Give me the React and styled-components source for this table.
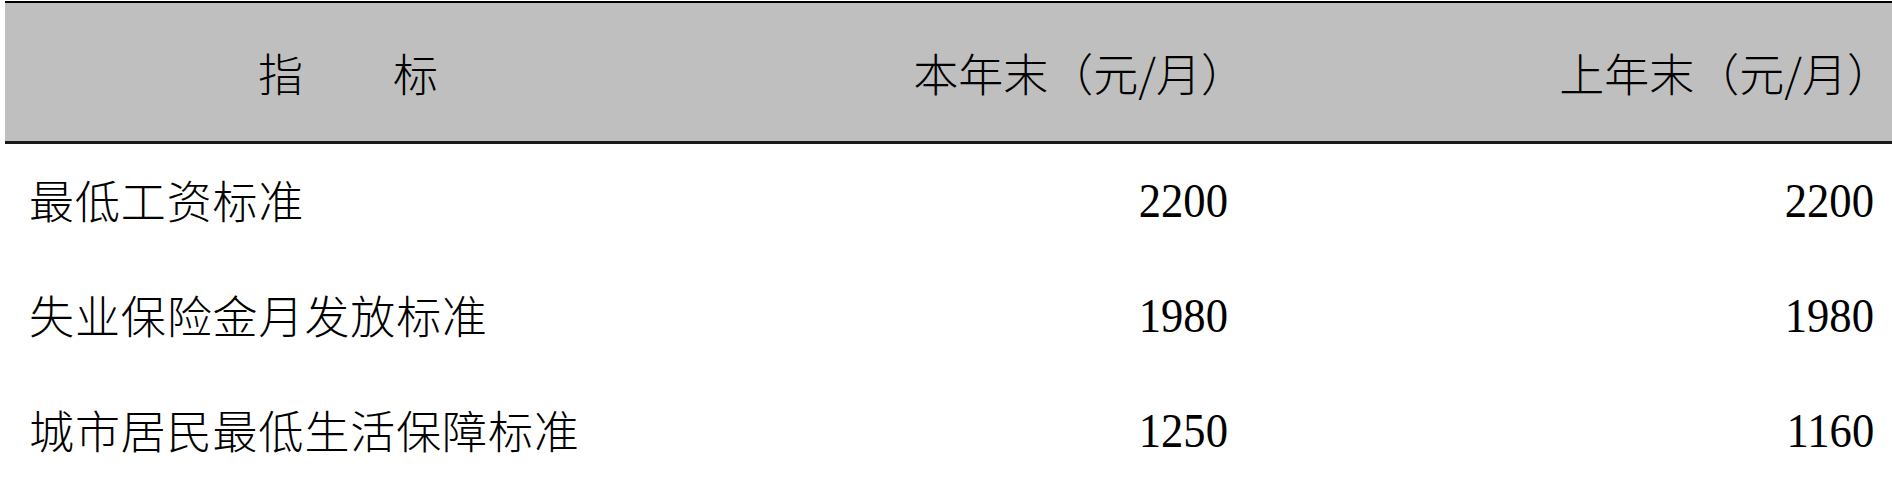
import React from "react";
import styled, { createGlobalStyle } from "styled-components";

const Global = createGlobalStyle`
  html, body { margin: 0; padding: 0; background: #ffffff; }
  body { font-family: "Liberation Serif", "Noto Sans CJK SC", serif; color: #000; }
`;

const Page = styled.div`
  padding: 1px 0 0 5px;
  width: 1892px;
  box-sizing: border-box;
`;

const Table = styled.div`
  display: grid;
  grid-template-columns: 686px 555px 1fr;
`;

const HeadCell = styled.div`
  background: #bfbfbf;
  border-top: 2px solid #000;
  border-bottom: 3px solid #1a1a1a;
  height: 138px;
  display: flex;
  align-items: center;
  justify-content: ${(p) => (p.$align === "center" ? "center" : "flex-end")};
  font-family: "Noto Sans CJK SC", "Liberation Serif", sans-serif;
  font-weight: 300;
  font-size: 45px;
  white-space: pre;
`;

const Cell = styled.div`
  height: 115px;
  box-sizing: border-box;
  display: flex;
  align-items: center;
  justify-content: ${(p) => (p.$num ? "flex-end" : "flex-start")};
  padding: ${(p) => (p.$num ? "0 18px 2px 0" : "0 0 5px 24px")};
  font-family: ${(p) =>
    p.$num ? `"Liberation Serif", serif` : `"Noto Sans CJK SC", sans-serif`};
  font-weight: ${(p) => (p.$num ? 400 : 300)};
  font-size: ${(p) => (p.$num ? "48px" : "45px")};
  letter-spacing: ${(p) => (p.$num ? "0" : "0.9px")};
  white-space: nowrap;
`;

const Num = styled.span`
  display: inline-block;
  transform: scaleX(0.93);
  transform-origin: right center;
`;

const rows = [
  ["最低工资标准", "2200", "2200"],
  ["失业保险金月发放标准", "1980", "1980"],
  ["城市居民最低生活保障标准", "1250", "1160"],
];

export default function App() {
  return (
    <Page>
      <Global />
      <Table>
        <HeadCell $align="center">指　　标</HeadCell>
        <HeadCell>本年末（元/月）</HeadCell>
        <HeadCell>上年末（元/月）</HeadCell>
        {rows.map((r) => (
          <React.Fragment key={r[0]}>
            <Cell>{r[0]}</Cell>
            <Cell $num>
              <Num>{r[1]}</Num>
            </Cell>
            <Cell $num>
              <Num>{r[2]}</Num>
            </Cell>
          </React.Fragment>
        ))}
      </Table>
    </Page>
  );
}
